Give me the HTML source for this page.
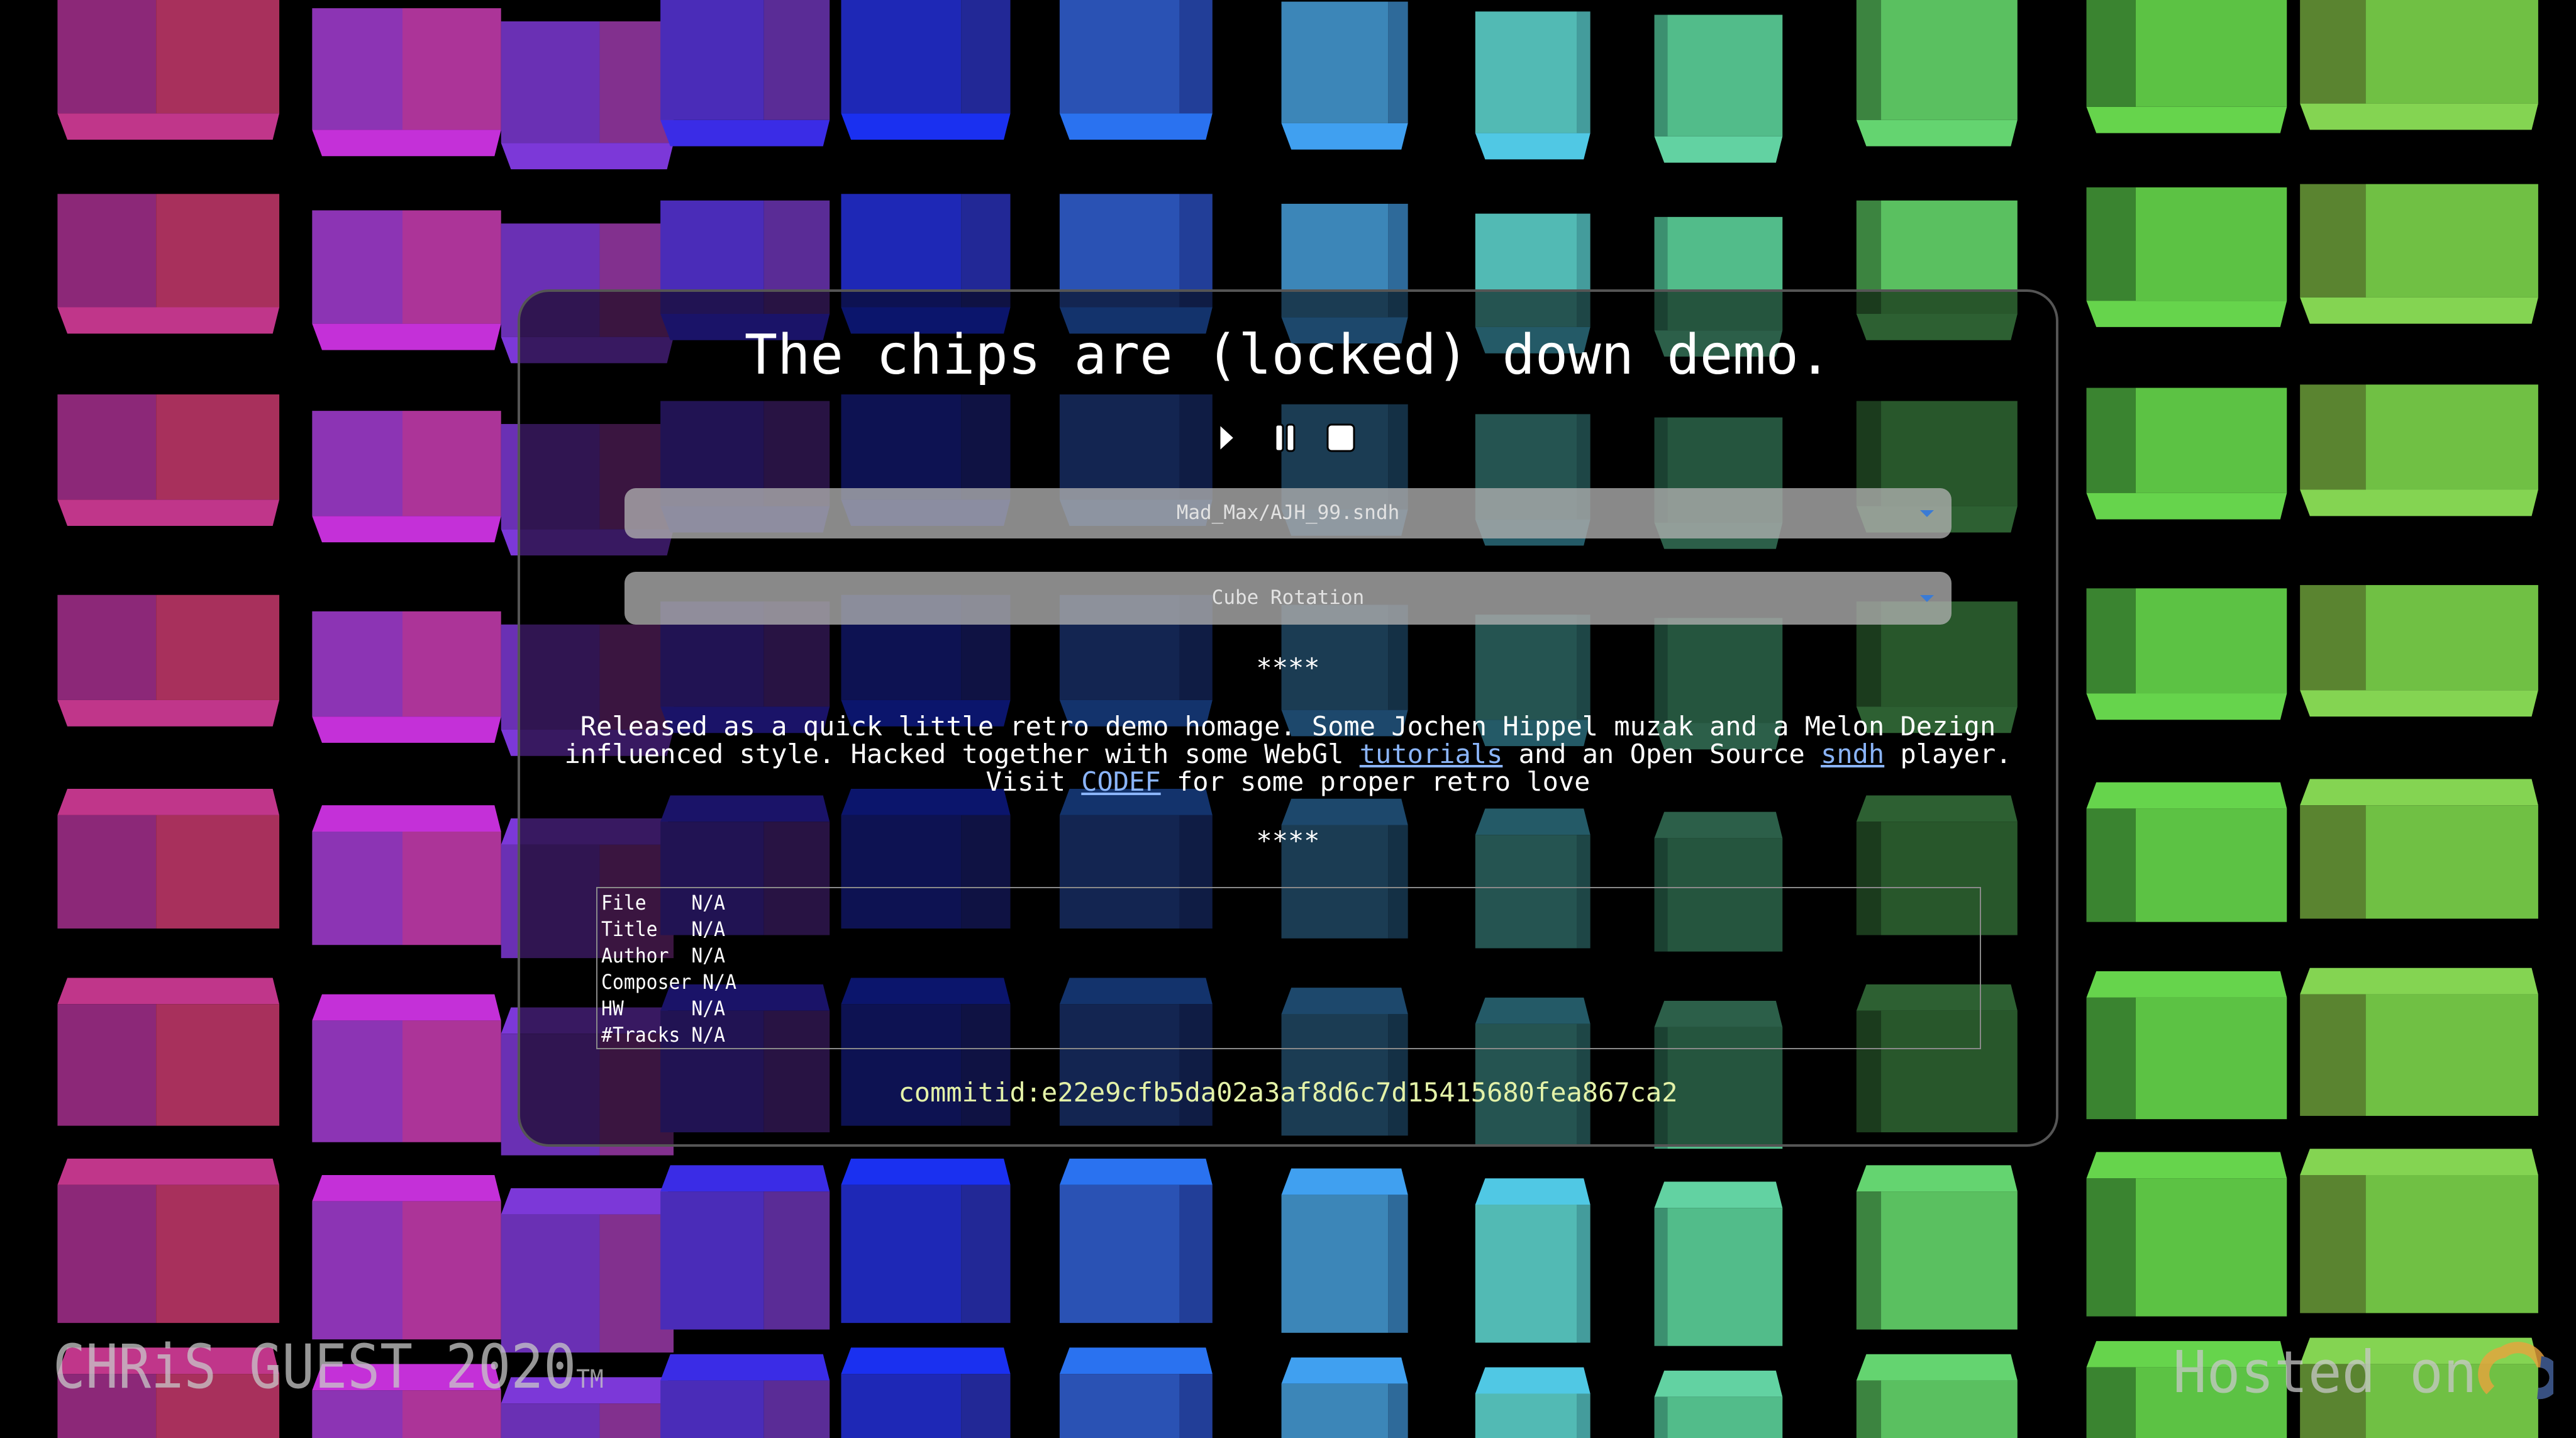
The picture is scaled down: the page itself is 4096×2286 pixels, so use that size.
<!DOCTYPE html>
<html><head><meta charset="utf-8">
<style>
html,body{margin:0;padding:0;background:#000;width:4096px;height:2286px;overflow:hidden;position:relative;font-family:"DejaVu Sans Mono","Liberation Mono",monospace;}
#bg{position:absolute;left:0;top:0;width:4096px;height:2286px;}
.panel{position:absolute;left:823px;top:460px;width:2442px;height:1355px;border:4px solid #555;border-radius:50px;background:rgba(0,0,0,0.55);}
.title{position:absolute;left:0;top:0;width:4096px;text-align:center;top:508px;color:#fff;font-size:87px;line-height:112px;white-space:pre;}
.sel{position:absolute;left:993px;width:2110px;border-radius:18px;background:rgba(175,175,175,0.78);color:#e2e2e2;font-size:31px;text-align:center;font-family:"DejaVu Sans Mono",monospace;}
.sel .ar{position:absolute;right:28px;top:50%;margin-top:-5px;width:0;height:0;border-left:11px solid transparent;border-right:11px solid transparent;border-top:11px solid #3a7bd5;}
.txt{position:absolute;left:0;width:4096px;text-align:center;color:#fff;font-size:42px;line-height:44px;}
a{color:#8ab4f8;text-decoration:underline;}
.tbl{position:absolute;left:948px;top:1410px;width:2198px;height:254px;border:2px solid #8a8a8a;}
.tbl div{position:absolute;left:6px;color:#fff;font-size:32px;line-height:42px;white-space:pre;transform:scaleX(0.93);transform-origin:left center;}
.commit{position:absolute;left:0;width:4096px;text-align:center;top:1712px;color:#e4f2a8;font-size:42px;line-height:50px;}
.foot{position:absolute;color:rgba(200,200,200,0.75);font-family:"DejaVu Sans Mono",monospace;white-space:pre;transform-origin:left center;}
</style></head><body>
<svg id="bg" viewBox="0 0 1568 875" preserveAspectRatio="none"></svg>
<script>
(function(){
var cols=[[35,170,95,'#8c2878','#a8305c','#c0368a'],[190,305,245,'#8c34b4','#ac3498','#c430d8'],[305,410,365,'#6a30b4','#82308e','#7c38d8'],[402,505,465,'#4a2cb8','#5a2c96','#3a2ce6'],[512,615,585,'#1e28b6','#222896','#1a30f0'],[645,738,718,'#2a52b4','#223e98','#2a72f0'],[780,857,845,'#3c86b8','#2e6a9a','#40a0f0'],[898,968,960,'#52bab4','#449c9c','#50c8e4'],[1007,1085,1015,'#3c9070','#52bc8a','#62d2a2'],[1130,1228,1145,'#3c8440','#5ac060','#64d470'],[1270,1392,1300,'#3a8430','#5cc244','#66d44c'],[1400,1545,1440,'#5a8430','#70c044','#84d452']];
var offs=[0,10,18,4,0,0,6,12,14,4,-4,-6];
var rows=[[-5,90],[118,85],[240,80],[362,80],[480,85],[595,90],[705,100],[820,70]];
var s='';
cols.forEach(function(c,ci){
 rows.forEach(function(r,ri){
  var off=offs[ci];
  var yt=r[0]+off, yb=yt+r[1], cap=16;
  if(ri<4){
   s+='<rect x="'+c[0]+'" y="'+yt+'" width="'+(c[2]-c[0])+'" height="'+(yb-yt-cap)+'" fill="'+c[3]+'"/>';
   s+='<rect x="'+c[2]+'" y="'+yt+'" width="'+(c[1]-c[2])+'" height="'+(yb-yt-cap)+'" fill="'+c[4]+'"/>';
   s+='<polygon points="'+c[0]+','+(yb-cap)+' '+c[1]+','+(yb-cap)+' '+(c[1]-4)+','+yb+' '+(c[0]+6)+','+yb+'" fill="'+c[5]+'"/>';
  } else {
   s+='<polygon points="'+(c[0]+6)+','+yt+' '+(c[1]-4)+','+yt+' '+c[1]+','+(yt+cap)+' '+c[0]+','+(yt+cap)+'" fill="'+c[5]+'"/>';
   s+='<rect x="'+c[0]+'" y="'+(yt+cap)+'" width="'+(c[2]-c[0])+'" height="'+(yb-yt-cap)+'" fill="'+c[3]+'"/>';
   s+='<rect x="'+c[2]+'" y="'+(yt+cap)+'" width="'+(c[1]-c[2])+'" height="'+(yb-yt-cap)+'" fill="'+c[4]+'"/>';
  }
 });
});
document.getElementById('bg').innerHTML=s;
})();
</script>
<div class="panel"></div>
<div class="title">The chips are (locked) down demo.</div>
<svg style="position:absolute;left:1935px;top:672px" width="230" height="48" viewBox="0 0 230 48">
<polygon points="4,2 4,46 28,24" fill="#fff" stroke="#000" stroke-width="3" stroke-linejoin="round"/>
<rect x="93" y="3" width="12" height="42" rx="4" fill="#fff" stroke="#000" stroke-width="3"/>
<rect x="111" y="3" width="12" height="42" rx="4" fill="#fff" stroke="#000" stroke-width="3"/>
<rect x="176" y="3" width="42" height="42" rx="6" fill="#fff" stroke="#000" stroke-width="3"/>
</svg>
<div class="sel" style="top:776px;height:80px;line-height:78px;">Mad_Max/AJH_99.sndh<span class="ar"></span></div>
<div class="sel" style="top:909px;height:84px;line-height:82px;">Cube Rotation<span class="ar"></span></div>
<div class="txt" style="top:1040px;">****</div>
<div class="txt" style="top:1133px;">Released as a quick little retro demo homage. Some Jochen Hippel muzak and a Melon Dezign<br>influenced style. Hacked together with some WebGl <a>tutorials</a> and an Open Source <a>sndh</a> player.<br>Visit <a>CODEF</a> for some proper retro love</div>
<div class="txt" style="top:1315px;">****</div>
<div class="tbl">
<div style="top:2px">File    N/A</div>
<div style="top:44px">Title   N/A</div>
<div style="top:86px">Author  N/A</div>
<div style="top:128px">Composer N/A</div>
<div style="top:170px">HW      N/A</div>
<div style="top:212px">#Tracks N/A</div>
</div>
<div class="commit">commitid:e22e9cfb5da02a3af8d6c7d15415680fea867ca2</div>
<div class="foot" style="left:84px;top:2118px;font-size:96px;line-height:110px;transform:scaleX(0.9);">CHRiS GUEST 2020<span style="font-size:40px">TM</span></div>
<div class="foot" style="left:3455px;top:2130px;font-size:92px;line-height:104px;transform:scaleX(0.97);">Hosted on</div>
<svg style="position:absolute;left:3940px;top:2110px" width="120" height="120" viewBox="0 0 120 120">
<path d="M20,100 A35,35 0 0 1 40,40 A40,40 0 0 1 100,55 A25,25 0 0 1 95,105" fill="none" stroke="#e8a33d" stroke-width="18" opacity="0.8"/>
<path d="M95,105 A25,25 0 0 0 100,55" fill="none" stroke="#2a4a8a" stroke-width="18" opacity="0.9"/>
</svg>
</body></html>
